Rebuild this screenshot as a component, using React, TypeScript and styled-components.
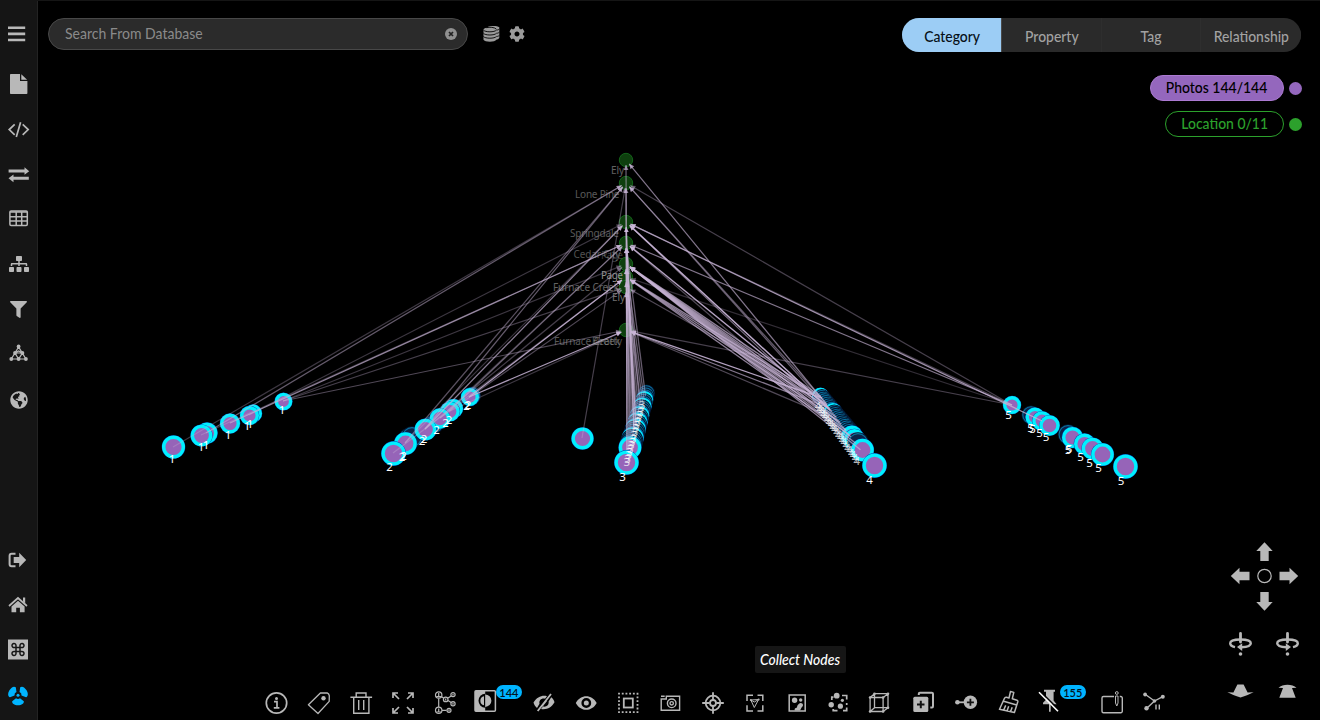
import React from 'react';
import styled, { createGlobalStyle } from 'styled-components';
import { FaSitemap, FaFilter, FaGlobeAmericas, FaCog } from 'react-icons/fa';

const GlobalStyle = createGlobalStyle`
  * { box-sizing: border-box; }
  body { margin: 0; background: #000; overflow: hidden; font-family: Lato, "Open Sans", sans-serif; }
  svg { display: block; flex: none; }
`;

const Shell = styled.div`
  display: flex;
  width: 1320px;
  height: 720px;
  background: #000;
  color: #b8b8b8;
  border-top: 1px solid #151515;
`;

const Sidebar = styled.nav`
  width: 38px;
  display: flex;
  flex-direction: column;
  background: #151515;
  border-right: 1px solid #232323;
  padding: 11px 0 2px;
`;

const SideGroup = styled.div<{ $gap?: number; $end?: boolean }>`
  display: flex;
  flex-direction: column;
  margin-top: ${p => (p.$end ? 'auto' : `${p.$gap ?? 0}px`)};
`;

const SideItem = styled.div<{ $active?: boolean; $lift?: number }>`
  height: 45px;
  display: grid;
  place-items: center;
  padding-bottom: ${p => p.$lift ?? 0}px;
  color: ${p => (p.$active ? '#00b4ff' : '#b8b8b8')};
`;

const Main = styled.main`
  flex: 1;
  position: relative;
  display: flex;
  flex-direction: column;
`;

const Canvas = styled.svg`
  position: absolute;
  left: 0;
  top: -1px;
`;

const Narrow = styled.span<{ $x: number; $origin?: string }>`
  display: block;
  white-space: nowrap;
  transform: scaleX(${p => p.$x});
  transform-origin: ${p => p.$origin ?? 'center'};
`;

const TopBar = styled.header`
  position: relative;
  display: flex;
  align-items: flex-start;
  padding: 17px 19px 0 10px;
`;

const SearchBox = styled.div`
  width: 420px;
  height: 32px;
  border: 1px solid #484848;
  border-radius: 16px;
  background: #2b2b2b;
  display: flex;
  align-items: center;
  justify-content: space-between;
  padding: 0 10px 0 16px;
  color: #8a8a8a;
  font-size: 15px;
  line-height: 18px;
`;

const SearchText = styled(Narrow)`
  padding-bottom: 2px;
`;

const TopIcons = styled.div`
  display: flex;
  align-items: center;
  height: 32px;
  gap: 9px;
  margin-left: 15px;
  color: #9a9a9a;
`;

const Tabs = styled.div`
  display: flex;
  margin-left: auto;
  width: 399px;
  height: 34px;
  border-radius: 17px;
  overflow: hidden;
  background: #2a2a2a;
`;

const Tab = styled.div<{ $active?: boolean }>`
  flex: 1 1 0;
  min-width: 0;
  display: flex;
  align-items: center;
  justify-content: center;
  padding: 0 0 0 1px;
  font-size: 16px;
  font-weight: 500;
  color: ${p => (p.$active ? '#071018' : '#a2a2a2')};
  background: ${p => (p.$active ? '#9ccdf5' : 'transparent')};
  border-right: 1px solid ${p => (p.$active ? '#4a4a4a' : '#2e2e2e')};
`;

const Legend = styled.div`
  position: relative;
  display: flex;
  flex-direction: column;
  align-items: flex-end;
  gap: 10px;
  padding: 23px 18px 0 0;
`;

const LegendRow = styled.div`
  display: flex;
  align-items: center;
  gap: 5px;
`;

const Pill = styled.div<{ $color: string; $filled?: boolean; $width: number }>`
  width: ${p => p.$width}px;
  height: 26px;
  border-radius: 13px;
  border: 1px solid ${p => (p.$filled ? '#ab7ad2' : p.$color)};
  background: ${p => (p.$filled ? p.$color : '#000')};
  color: ${p => (p.$filled ? '#000' : p.$color)};
  display: flex;
  align-items: center;
  justify-content: center;
  padding-bottom: 2px;
  font-size: 15px;
  font-weight: 500;
`;

const Dot = styled.span<{ $color: string }>`
  width: 13px;
  height: 13px;
  border-radius: 50%;
  background: ${p => p.$color};
`;

const Bottom = styled.footer`
  position: relative;
  margin-top: auto;
  display: flex;
  align-items: flex-end;
  justify-content: space-between;
  padding: 0 20px 0 217.4px;
`;

const ToolColumn = styled.div`
  display: flex;
  flex-direction: column;
`;

const Tip = styled.div`
  width: 91px;
  height: 27px;
  margin: 0 0 16px 499.6px;
  padding-bottom: 2px;
  display: flex;
  align-items: center;
  justify-content: center;
  background: #161616;
  border-radius: 2px;
  color: #fff;
  font-size: 15px;
  font-weight: 500;
  font-style: italic;
`;

const Toolbar = styled.div`
  display: flex;
  padding-bottom: 3px;
`;

const Tool = styled.div<{ $width?: number; $pad?: number }>`
  width: ${p => p.$width ?? 42.2}px;
  padding-left: ${p => p.$pad ?? 7.1}px;
  display: flex;
  color: #b8b8b8;
`;

const Badge = styled.span`
  width: 26px;
  height: 14px;
  flex: none;
  margin: -4px 0 0 -3px;
  border-radius: 7px;
  background: #00b4ff;
  color: #04121c;
  display: grid;
  place-items: center;
  font-size: 11px;
  font-weight: 600;
`;

const NavPad = styled.div`
  width: 72px;
  display: flex;
  flex-direction: column;
  padding-bottom: 22px;
`;

const Arrows = styled.div`
  display: grid;
  grid-template-columns: repeat(3, 24px);
  grid-template-rows: 24px 24px 25px;
  align-items: end;
`;

const Pair = styled.div<{ $top: number }>`
  display: flex;
  justify-content: space-between;
  margin: ${p => p.$top}px -1px 0;
`;

type IconProps = { size?: number; children: React.ReactNode; w?: number };
const Icon = ({ size = 28, w = 1.5, children }: IconProps) => (
  <svg width={size} height={size} viewBox={`0 0 ${size} ${size}`} fill="none" stroke="currentColor" strokeWidth={w}>
    {children}
  </svg>
);
const Solid = { fill: 'currentColor', stroke: 'none' };

const MenuIcon = () => (
  <Icon size={25}><path {...Solid} d="M2 4.6h17.2v2.5H2zM2 10.6h17.2v2.6H2zM2 16.7h17.2v2.5H2z" /></Icon>
);
const FileIcon = () => (
  <Icon size={25}><path {...Solid} d="M4.8 2H14v7h7.4v12.2a.8.8 0 0 1-.8.8H4.8a.8.8 0 0 1-.8-.8V2.8a.8.8 0 0 1 .8-.8zM15.300 2.200l5.800 5.600h-5.800z" /></Icon>
);
const CodeIcon = () => (
  <Icon size={25} w={1.7}><path d="M8.700 7.300 3.200 12.600l5.500 5.300M16.700 7.300l5.500 5.300-5.500 5.300M14.600 5.200l-4.300 14.700" /></Icon>
);
const SwapIcon = () => (
  <Icon size={25}><path {...Solid} d="M2.600 7.600h15.900V5.200l4.700 4-4.700 3.500v-2.300H2.600zM22.800 14.700H7.500v-2.200l-5 3.800 5 4v-2.500h15.300z" /></Icon>
);
const TableIcon = () => (
  <Icon size={25} w={1.5}>
    <rect x="3.900" y="3.900" width="17.400" height="14.600" rx="1.200" />
    <path d="M4 5h17.200M4 9.700h17M4 13.900h17M10.200 5v13.500M15.700 5v13.500" />
  </Icon>
);
const NetIcon = () => (
  <Icon size={25} w={1.2}>
    <path d="M12.600 5 5.300 17h14.600zM9 11h7.400L12.600 17zM9 11l3.600-2 3.800 2M9 11l-3.700 6M16.400 11l3.500 6" />
    {[[12.6, 4.5], [9, 11], [16.4, 11], [5.3, 17], [12.6, 17], [19.9, 17]].map(([x, y]) => (
      <circle key={`${x}-${y}`} cx={x} cy={y} r="1.900" {...Solid} />
    ))}
  </Icon>
);
const ExitIcon = () => (
  <Icon size={25} w={2}>
    <path d="M9.500 5.800H5.600a2 2 0 0 0-2 2v8.400a2 2 0 0 0 2 2h3.900" />
    <path {...Solid} d="M7.700 9h5.500V4.700l7 7.200-7 7.300V15H7.700z" />
  </Icon>
);
const HomeIcon = () => (
  <Icon size={25} w={1.7}>
    <path d="m3 13 9-8 9 8" />
    <path {...Solid} d="M17 4.500h2.200v6L17 8.500zM5.500 13.500 12 7.800l6.600 5.700v5.700h-4.700v-4.500h-3.700v4.500H5.500z" />
  </Icon>
);
const CommandIcon = () => (
  <Icon size={25}>
    <path {...Solid} d="M2 1.500h20v20H2z" />
    <path stroke="#161616" d="M10 9.500h4v4h-4zM10 9.500H8.300a2 2 0 1 1 1.700-2zM14 9.500h1.700a2 2 0 1 0-1.700-2zM10 13.500H8.300a2 2 0 1 0 1.700 2zM14 13.500h1.700a2 2 0 1 1-1.700 2z" />
  </Icon>
);
const FanIcon = () => (
  <Icon size={25}>
    <circle cx="12" cy="12.300" r="1.500" {...Solid} />
    {[0, 120, 240].map(a => (
      <path key={a} {...Solid} transform={`rotate(${a} 12 12.300)`} d="M10 15.200a3.400 3.400 0 0 0 4 0l3.800 3c.5 2.300-2.100 4-5.800 4s-6.300-1.700-5.800-4z" />
    ))}
  </Icon>
);

const ClearIcon = () => (
  <svg width="12" height="12" viewBox="0 0 12 12">
    <circle cx="6" cy="6" r="6" fill="#909090" />
    <path d="m4 4 4 4m0-4L4 8" stroke="#222" strokeWidth="1.700" />
  </svg>
);
const DatabaseIcon = () => (
  <svg width="17" height="18" viewBox="0 0 17 18" fill="currentColor">
    <path d="M4 2.500C6 .8 14 .5 16.300 2.300v10.500c-.4 1.200-2 1.800-3.500 2V5z" />
    <path d="M.5 4.500v10.300c1 2.500 11.800 2.500 12.800 0V4.500z" />
    <ellipse cx="6.900" cy="4.500" rx="6.400" ry="2" />
    <path d="M.4 5c1.500 2.400 11.500 2.400 13 0M.4 8.200c1.500 2.400 11.500 2.400 13 0M.4 11.400c1.500 2.400 11.500 2.400 13 0M13.500 5.200c1.500-.3 2.500-.7 3-1.300M13.500 8.400c1.500-.3 2.500-.7 3-1.300M13.500 11.600c1.500-.3 2.500-.7 3-1.300M3.500 2.700c3-.8 8-.6 9.800 1.400" fill="none" stroke="#000" strokeWidth=".9" />
  </svg>
);

const InfoIcon = () => (
  <Icon w={1.7}>
    <circle cx="14.500" cy="14" r="10.200" />
    <circle cx="14.500" cy="9.500" r="1.500" {...Solid} />
    <path d="M12 12.700h3v6M11.800 18.800h5.600" />
  </Icon>
);
const TagIcon = () => (
  <Icon w={1.3}>
    <path strokeLinejoin="round" d="M3.400 15.700 15.400 4l6.800-.2c1 .4 1.900 1.500 2.100 2.900l-.1 5.700-11.200 12.100z" />
    <circle cx="18.500" cy="9.300" r="2.200" {...Solid} />
  </Icon>
);
const TrashIcon = () => (
  <Icon w={1.4}><path d="M3.400 8.200h21.700M9.200 8V4h9.800v4M6.700 8.500v15.700h15.200V8.500M11.700 11v10M16.700 11v10" /></Icon>
);
const ExpandIcon = () => (
  <Icon w={1.7}><path d="M4 9V4h5M4 4l6 6M19 4h5v5M24 4l-6 6M4 19v5h5M4 24l6-6M24 19v5h-5M24 24l-6-6" /></Icon>
);
const PeopleIcon = () => (
  <Icon w={1.2}>
    <path d="M7.700 9.500V18M10.600 7.800l2 1.300M17 9l3.200-2M17 11.500l3.200 2M11 21.300h4.500" />
    <circle cx="7.700" cy="6" r="3.200" /><circle cx="14.700" cy="10.400" r="2.300" /><circle cx="22" cy="5.600" r="2.100" />
    <circle cx="22" cy="14.700" r="2.100" /><circle cx="7.700" cy="21.300" r="3.200" /><circle cx="18" cy="21.300" r="2" />
    <path d="M5.200 7.700h5M5.200 23h5M7.700 4v3M7.700 19.500v3M14.700 9.500v2M22 4.500v2M22 13.700v2M18 20.300v2" />
  </Icon>
);
const ContrastIcon = () => (
  <Icon>
    <rect x="4" y="1.800" width="20.400" height="20.400" rx="1" />
    <path {...Solid} d="M4 1.800h10.200v20.400H4z" />
    <path fill="#000" stroke="none" d="M14.200 4.700a6.700 7 0 0 0 0 14z" />
    <path {...Solid} d="M14.200 5.500a6.200 6.200 0 0 1 0 12.400zM13 7.200v9a4.600 4.600 0 0 1 0-9z" />
  </Icon>
);
const EyeOffIcon = () => (
  <Icon w={1.8}>
    <path {...Solid} d="M3.500 13.600C7 8 12 6 17 7.200l-2 2.500c-3.500-.8-6.200 1.500-5.500 5L7 19c-1.700-1.300-3-3.300-3.500-5.400zM24.500 13.200c-3 5.400-8 7.800-13.500 6.700l2-2.400c3.500.7 6.200-1.600 5.600-5l2.600-4.200c1.700 1.300 2.800 3 3.300 4.900z" />
    <path d="M21 5 7.700 22M16.300 11.500l-4.500 5.700" />
  </Icon>
);
const EyeIcon = () => (
  <Icon>
    <path {...Solid} fillRule="evenodd" d="M3.800 14C8.500 4.900 20 4.900 24.700 14 20 23.100 8.500 23.100 3.800 14zm10.500-4.900a4.900 4.900 0 1 0 0 9.800 4.900 4.900 0 0 0 0-9.800z" />
    <circle cx="14.300" cy="14" r="2.500" {...Solid} />
  </Icon>
);
const SelectIcon = () => (
  <Icon w={1.8}>
    <rect x="5" y="4.700" width="18.500" height="18.500" strokeDasharray="1.850 1.850" strokeDashoffset=".9" />
    <rect x="9.800" y="9.500" width="9" height="9" />
  </Icon>
);
const CameraIcon = () => (
  <Icon w={1.4}>
    <path d="M5.200 21.300V10h5.100V7.200h13.300v14.100zM5 7.200h3.700" />
    <circle cx="15.700" cy="14.300" r="4.300" /><circle cx="15.700" cy="14.300" r="1.700" />
  </Icon>
);
const TargetIcon = () => (
  <Icon w={1.8}>
    <circle cx="14" cy="14" r="7.300" /><circle cx="14" cy="14" r="3" />
    <path d="M14 3.200v7.500M14 17.300v7.500M3.200 14h7.500M17.300 14h7.500" />
  </Icon>
);
const FitIcon = () => (
  <Icon>
    <path d="M12 6.300H6v5.800M16.500 6.300h5.300v5.800M6 16.300V22h6M21.800 16.300V22h-5.300" />
    <path strokeWidth="1" d="m9.800 11 7.800-.5-4.300 8zM9.800 11l3.500 2 4.300-2.500" />
    <circle cx="9.800" cy="11" r="1" {...Solid} /><circle cx="17.600" cy="10.500" r="1" {...Solid} />
  </Icon>
);
const PictureIcon = () => (
  <Icon>
    <rect x="6.200" y="6" width="16" height="16" />
    <circle cx="11.600" cy="11.300" r="2.700" {...Solid} /><circle cx="17.700" cy="11" r="1.700" {...Solid} />
    <path {...Solid} d="M16 14.700c1.500-1.200 3.800-.5 4 1.300.1 1.500-1.500 2-1.800 3.300L17 21.500h-5.300c-.4-1.700.5-2.700 2-2.700.7-1.700.6-2.900 2.300-4.100z" />
  </Icon>
);
const CollectIcon = () => (
  <Icon w={1.7}>
    <path d="M6.800 11V8.200h1.700M17 6.500h4.700v4M21.700 14v2M21.700 18.500v3.200H18M12.500 21.700H8.200V20" />
    <circle cx="11.700" cy="6.700" r="2.900" {...Solid} /><circle cx="6.200" cy="15.700" r="2.700" {...Solid} />
    <circle cx="15.400" cy="17.200" r="2.600" {...Solid} /><circle cx="17.400" cy="11.300" r="1.600" {...Solid} />
  </Icon>
);
const CubeIcon = () => (
  <Icon w={1.3}>
    <path d="M3.100 8.500h13v14h-13zM7.500 4.700H21v14H7.500zM3.100 8.500l4.400-3.800M16.100 8.500 21 4.700M3.100 22.500l4.400-3.800M16.100 22.500l4.900-3.800" />
    {[[3.1, 8.5], [16.1, 8.5], [7.5, 4.7], [21, 4.7], [3.1, 22.5], [16.1, 22.5], [21, 18.7]].map(([x, y]) => (
      <circle key={`${x}-${y}`} cx={x} cy={y} r="1.300" {...Solid} />
    ))}
  </Icon>
);
const DuplicateIcon = () => (
  <Icon w={2}>
    <path d="M8.800 6V4.800c0-.6.4-1 1-1h12c.7 0 1.200.4 1.200 1v12.400c0 .7-.4 1.200-1 1.200h-1.700" />
    <rect x="3.300" y="7.800" width="15" height="15.300" rx="1.500" {...Solid} />
    <path stroke="#111" d="M10.800 11.800v7.400M7 15.500h7.500" />
  </Icon>
);
const AddEdgeIcon = () => (
  <Icon w={1.8}>
    <path d="M5 13.300h8" /><circle cx="5.400" cy="13.300" r="2.300" {...Solid} /><circle cx="18.400" cy="13.300" r="6.700" {...Solid} />
    <path stroke="#111" d="M18.400 9.800v7M14.900 13.300h7" />
  </Icon>
);
const BroomIcon = () => (
  <Icon w={1.5}>
    <path strokeLinejoin="round" d="m16.500 2.500 3.300.9-1.500 6.300 4.700 1.500c.8.300 1 .8.800 1.600l-3.400 10.700L5.500 20.300l5-11c.4-.9 1-1.200 1.900-1l2.600.7zM9.700 12.200l13 3.800M9.700 21l2-4.600M13 22l1.700-4.700M16.500 22.700l1.700-4.500" />
  </Icon>
);
const PinOffIcon = () => (
  <Icon w={1.5}>
    <path {...Solid} d="M9 .8h11v2h-1.400v8.700l3 3.700H8v-1.500l3-3V2.800H9zM14 15h1.700v7.700H14z" />
    <path stroke="#000" strokeWidth="1.600" d="m5 2 19 19" />
    <path stroke="#fff" strokeWidth="1.600" d="m4 3.200 19 19" />
  </Icon>
);
const PadIcon = () => (
  <Icon w={1.4}>
    <path d="M16 7.500H5.500A1.500 1.500 0 0 0 4 9v13.200a1.500 1.500 0 0 0 1.500 1.500h17.300a1.500 1.500 0 0 0 1.500-1.500V9a1.500 1.500 0 0 0-1.500-1.500h-1" />
    <path strokeWidth="1" d="M17.500 7h2.500v7l-1.200 3-1.300-3z" /><circle cx="18.800" cy="4" r="1.400" strokeWidth="1" />
  </Icon>
);
const BranchIcon = () => (
  <Icon w={1.4}>
    <path d="M5.100 5.300 14.500 12l8.300-4.300M14.500 12l-8 7.500M16 15.500v5M19.300 15.500v5" />
    <circle cx="5.100" cy="5.500" r="1.900" {...Solid} /><circle cx="22.800" cy="7.700" r="2" {...Solid} />
    <circle cx="6.500" cy="19.200" r="2.200" {...Solid} /><circle cx="14.500" cy="12" r="1.800" {...Solid} />
  </Icon>
);

const ArrowIcon = ({ turn }: { turn: number }) => (
  <Icon size={24}><path {...Solid} transform={`translate(.5 0) rotate(${turn} 12 12)`} d="m12 2.300 8.200 8.700h-4v10H7.800v-10h-4z" /></Icon>
);
const RotateIcon = ({ flip }: { flip?: boolean }) => (
  <Icon size={27} w={2.4}>
    <g transform={flip ? 'matrix(-1 0 0 1 27 0)' : undefined}>
      <path d="M8 16.100c-3-.7-4.800-2.200-4.800-3.900C3.200 9.800 7.700 8.500 13.500 8.500s10.300 1.300 10.300 3.700c0 2.200-3.500 3.700-9.300 4" />
      <path {...Solid} d="m10 16.100 5.200-3.800V20z" />
      <path strokeLinecap="round" strokeWidth="2.800" d="M13.500 2.500V11" /><circle cx="13.500" cy="23" r="1.800" {...Solid} />
    </g>
  </Icon>
);
const TiltIcon = ({ up }: { up?: boolean }) => (
  <svg width="27" height="14" viewBox="0 0 27 14" fill="currentColor">
    <path d={up ? 'M9 4 4.500 3.700C6.500 2 10 .8 13.500.8s7 1.200 9 2.900L18 4l3.700 9.700H5.300z' : 'M10.400.5h6.200l4 8 6-.2c-3.500 1.700-8 4-13.100 5.200C8.400 12.300 3.900 10 .4 8.300l6 .2z'} />
  </svg>
);

// Graph data: hubs hold the locations, clusters hold the photo nodes.
const HUB_X = 626;
const hubs = [160, 183, 222, 243, 264, 277, 287, 330];
type N = [number, number, number];
const lerp = (a: N, b: N, t: number): N => [a[0] + (b[0] - a[0]) * t, a[1] + (b[1] - a[1]) * t, a[2] + (b[2] - a[2]) * t];
const chain = (a: N, b: N, n: number) => Array.from({ length: n }, (_, i) => lerp(a, b, i / n));

const openNodes: N[] = [
  [283.5, 401.5, 8.3], [253, 413.5, 8.5], [249.5, 415.5, 9], [230, 423.5, 9.5], [207, 433, 10], [201.5, 435.5, 10.3], [173.5, 447, 11],
  [582.5, 438.5, 10.5],
  [1012, 405, 8.5], [1035, 417, 9], [1042, 421, 9.3], [1049.5, 425.5, 9.7], [1072.5, 437.5, 10], [1084.5, 444, 10], [1092.5, 448.5, 10.3], [1102.5, 454.5, 10.8], [1125.5, 466.5, 11.6],
];
const shadowNodes: N[] = [
  [472, 395.5, 8.3], [431, 426, 9.5], [434, 424, 9], [409, 439, 10.3], [412, 437, 10], [1031, 415, 8.8], [1068, 434.5, 9.5],
];
const cluster2: N[] = [
  [470, 397, 8.5], [453.5, 408.5, 9], [450, 411.5, 9.3], [440, 418.5, 9.7], [425.5, 429.5, 10.3], [405.5, 443.5, 10.8], [393.5, 453.5, 11.6],
];
const cluster3 = chain([646.5, 393, 7.8], [630, 447, 10.8], 24);
const cluster4 = chain([820.5, 396, 7.8], [862, 450, 10.8], 30);

// Each edge: hub height, node x, node y, opacity, stroke width.
type E = [number, number, number, number, number?];
const edges: E[] = [
  [183, 206, 433, 0.5], [183, 173, 447, 0.3], [183, 425, 429, 0.5], [183, 405, 443, 0.45], [183, 582, 438, 0.35],
  [222, 249, 415, 0.3], [222, 425, 429, 0.7], [222, 405, 443, 0.3],
  [243, 230, 423, 0.7], [243, 201, 435, 0.3], [243, 449, 411, 0.5], [243, 440, 418, 0.3],
  [264, 283, 401, 0.3], [264, 425, 429, 0.35], [277, 469, 397, 0.9], [277, 393, 453, 0.35], [287, 283, 401, 0.35], [287, 440, 418, 0.4],
  [330, 283, 401, 0.4], [330, 469, 397, 0.85], [330, 450, 411, 0.3],
  [160, 827, 405, 0.65], [183, 826, 403, 0.5], [183, 836, 417, 0.5], [183, 1012, 405, 0.35],
  [222, 1042, 421, 0.8], [222, 1012, 405, 0.35], [222, 830, 410, 0.95, 1.5], [222, 846, 430, 0.6],
  [243, 1012, 405, 0.65], [243, 828, 407, 0.9, 1.4], [243, 850, 436, 0.4],
  [277, 1012, 405, 0.25], [330, 1012, 405, 0.35],
  [330, 822, 398, 0.9, 1.4], [330, 829, 408, 0.65], [330, 838, 420, 0.4], [287, 822, 398, 0.4],
  ...[0, 4, 7, 10, 13, 16, 19, 22, 25].map((k): E => [264, 820.5 + k * 1.6, 396 + k * 2.15, 0.7, 1.3]),
  ...[1, 6, 12, 18].map((k): E => [277, 820.5 + k * 1.6, 396 + k * 2.15, 0.7, 1.3]),
  [160, 627, 462, 0.55], [183, 627, 462, 0.6], [222, 634, 430, 0.85, 1.5], [243, 636, 425, 0.75, 1.5],
  ...Array.from({ length: 14 }, (_, k): E => [hubs[3 + (k % 4)], 645.5 - k * 1.3, 396 + k * 4.3, 0.5, 1.3]),
];

const hubLabels: [string, number, number, number, number][] = [
  ['Ely', 611, 174, 0.6, 13], ['Lone Pine', 575, 198, 0.55, 44.5], ['Springdale', 570, 237, 0.55, 49], ['Cedar City', 573.5, 258, 0.5, 47],
  ['Page', 601, 259, 0.35, 22], ['Page', 601, 279, 0.9, 22], ['Furnace Creek', 553, 291, 0.6, 66], ['Ely', 612, 301, 0.7, 13],
  ['Furnace Creek', 554, 345, 0.55, 66], ['Beatty', 592, 345, 0.5, 30],
];

const nodeLabels: [string, number, number][] = [
  ['1', 172, 463], ['1', 201, 451], ['1', 206, 449], ['1', 228, 439], ['1', 247, 430], ['1', 250, 428], ['1', 282, 414],
  ['2', 389.5, 471], ['2', 402, 461], ['2', 403.5, 460], ['2', 422, 445], ['2', 424, 443], ['2', 436.5, 434], ['2', 445.5, 427], ['2', 449, 424], ['2', 466.5, 410], ['2', 468, 409],
  ['3', 622.5, 481],
  ['4', 869.5, 484],
  ['5', 1008.5, 419], ['5', 1030.5, 432], ['5', 1032.5, 433], ['5', 1039.5, 437], ['5', 1046, 441], ['5', 1068, 454], ['5', 1069, 453], ['5', 1080.5, 461], ['5', 1089.5, 467], ['5', 1098.5, 472], ['5', 1121, 485],
];
const denseLabels: [string, number, number][] = [
  ...Array.from({ length: 18 }, (_, k): [string, number, number] => ['3', 642 - k * 0.9, 409 + k * 3.35]),
  ...Array.from({ length: 22 }, (_, k): [string, number, number] => ['4', 818 + k * 1.85, 410 + k * 2.6]),
];

const Node = ({ n: [x, y, r], dim }: { n: N; dim?: boolean }) => (
  <g>
    <circle cx={x} cy={y} r={r + 0.8} fill={dim ? '#04142e' : '#0040b0'} />
    <circle cx={x} cy={y} r={dim ? r - 0.6 : r - 1.2} fill={dim ? '#0b2148' : '#9664b8'} stroke={dim ? '#08709c' : '#00f0ff'} strokeWidth={dim ? 1.1 : 3.4} />
  </g>
);

const Graph = () => (
  <Canvas width="1282" height="720" viewBox="38 0 1282 720">
    {hubs.map(y => <circle key={y} cx={HUB_X} cy={y} r="6.700" fill="#0e3f0e" stroke="#14641a" />)}
    {shadowNodes.map((n, i) => <Node key={i} n={n} dim />)}
    {openNodes.map((n, i) => <Node key={i} n={n} />)}
    {cluster2.map((n, i) => <Node key={i} n={n} />)}
    {cluster3.map((n, i) => <Node key={i} n={n} dim={![3, 6, 10, 13, 16, 20].includes(i)} />)}
    {cluster4.map((n, i) => <Node key={i} n={n} dim={![0, 9].includes(i)} />)}
    <Node n={[630, 447.5, 10.8]} />
    <Node n={[852, 436, 10]} />
    <Node n={[854.5, 439.5, 10]} />
    <Node n={[858, 443, 10]} dim />
    <Node n={[862.5, 450, 10.8]} />
    {edges.map(([hy, x, y, o, w], i) => {
      const d = Math.hypot(x - HUB_X, y - hy);
      const ux = (x - HUB_X) / d;
      const uy = (y - hy) / d;
      const tx = HUB_X + ux * 5;
      const ty = hy + uy * 5;
      return (
        <g key={i} stroke="#c8b4d6" fill="#cdb9dc">
          <path d={`M${tx} ${ty}L${x} ${y}`} strokeWidth={w ?? 1.2} opacity={o} />
          <path stroke="none" opacity={Math.min(1, o + 0.1)} d={`M${tx} ${ty}l${ux * 5 - uy * 2.4} ${uy * 5 + ux * 2.4}l${uy * 4.8} ${-ux * 4.8}z`} />
        </g>
      );
    })}
    <Node n={[626.5, 462.5, 11.6]} />
    <Node n={[874.5, 465.5, 11.6]} />
    <g fontFamily="'Noto Sans', sans-serif" fontSize="10" fill="#a0a0a0">
      {hubLabels.map(([t, x, y, o, w], i) => <text key={i} x={x} y={y} opacity={o} textLength={w}>{t}</text>)}
    </g>
    <g fontFamily="'Noto Sans', sans-serif" fontSize="11.500" fill="#fff" textAnchor="middle">
      {denseLabels.map(([t, x, y], i) => <text key={i} x={x} y={y} opacity="0.7">{t}</text>)}
      {nodeLabels.map(([t, x, y], i) => <text key={i} x={x} y={y}>{t}</text>)}
    </g>
  </Canvas>
);

export default function App() {
  return (
    <Shell>
      <GlobalStyle />
      <Sidebar>
        <SideItem><MenuIcon /></SideItem>
        <SideGroup $gap={5}>
          <SideItem><FileIcon /></SideItem>
          <SideItem><CodeIcon /></SideItem>
          <SideItem><SwapIcon /></SideItem>
          <SideItem><TableIcon /></SideItem>
          <SideItem $lift={2}><FaSitemap size={20} /></SideItem>
          <SideItem><FaFilter size={17} /></SideItem>
          <SideItem><NetIcon /></SideItem>
          <SideItem><FaGlobeAmericas size={18} /></SideItem>
        </SideGroup>
        <SideGroup $end>
          <SideItem><ExitIcon /></SideItem>
          <SideItem><HomeIcon /></SideItem>
          <SideItem><CommandIcon /></SideItem>
          <SideItem $active><FanIcon /></SideItem>
        </SideGroup>
      </Sidebar>
      <Main>
        <Graph />
        <TopBar>
          <SearchBox><SearchText $x={0.935} $origin="left">Search From Database</SearchText><ClearIcon /></SearchBox>
          <TopIcons><DatabaseIcon /><FaCog size={16} /></TopIcons>
          <Tabs>
            <Tab $active><Narrow $x={0.87}>Category</Narrow></Tab>
            <Tab><Narrow $x={0.87}>Property</Narrow></Tab>
            <Tab><Narrow $x={0.87}>Tag</Narrow></Tab>
            <Tab><Narrow $x={0.87}>Relationship</Narrow></Tab>
          </Tabs>
        </TopBar>
        <Legend>
          <LegendRow><Pill $color="#9467bd" $filled $width={134}><Narrow $x={0.93}>Photos 144/144</Narrow></Pill><Dot $color="#9467bd" /></LegendRow>
          <LegendRow><Pill $color="#2ca02c" $width={119}><Narrow $x={0.93}>Location 0/11</Narrow></Pill><Dot $color="#2ca02c" /></LegendRow>
        </Legend>
        <Bottom>
          <ToolColumn>
            <Tip><Narrow $x={0.93}>Collect Nodes</Narrow></Tip>
            <Toolbar>
              <Tool><InfoIcon /></Tool>
              <Tool><TagIcon /></Tool>
              <Tool><TrashIcon /></Tool>
              <Tool><ExpandIcon /></Tool>
              <Tool><PeopleIcon /></Tool>
              <Tool $width={56.5} $pad={4.6}><ContrastIcon /><Badge>144</Badge></Tool>
              <Tool><EyeOffIcon /></Tool>
              <Tool><EyeIcon /></Tool>
              <Tool><SelectIcon /></Tool>
              <Tool><CameraIcon /></Tool>
              <Tool><TargetIcon /></Tool>
              <Tool><FitIcon /></Tool>
              <Tool><PictureIcon /></Tool>
              <Tool><CollectIcon /></Tool>
              <Tool><CubeIcon /></Tool>
              <Tool><DuplicateIcon /></Tool>
              <Tool><AddEdgeIcon /></Tool>
              <Tool><BroomIcon /></Tool>
              <Tool $width={61.6} $pad={5.7}><PinOffIcon /><Badge>155</Badge></Tool>
              <Tool><PadIcon /></Tool>
              <Tool><BranchIcon /></Tool>
            </Toolbar>
          </ToolColumn>
          <NavPad>
            <Arrows>
              <span /><ArrowIcon turn={0} /><span />
              <ArrowIcon turn={-90} />
              <Icon size={24} w={1.2}><circle cx="12.500" cy="12" r="6.700" /></Icon>
              <ArrowIcon turn={90} />
              <span /><ArrowIcon turn={180} /><span />
            </Arrows>
            <Pair $top={18}><RotateIcon /><RotateIcon flip /></Pair>
            <Pair $top={26}><TiltIcon /><TiltIcon up /></Pair>
          </NavPad>
        </Bottom>
      </Main>
    </Shell>
  );
}
